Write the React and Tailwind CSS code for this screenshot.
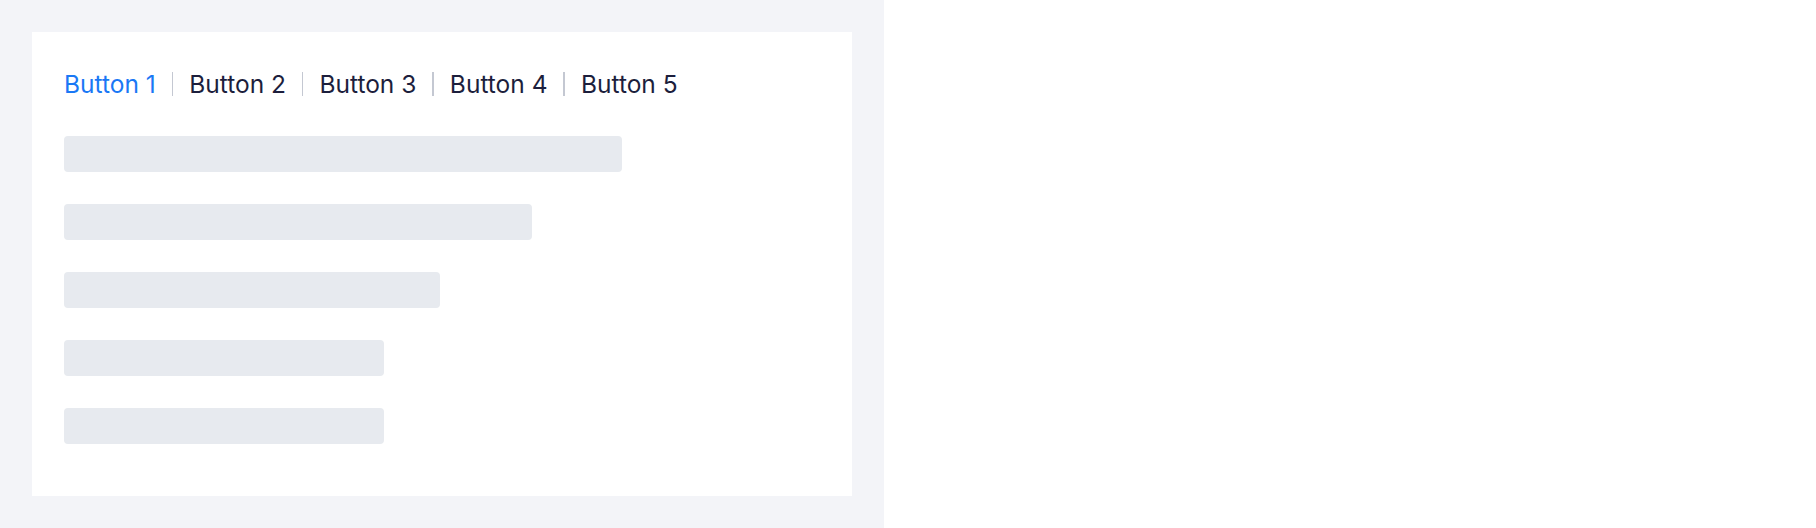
const tabs = ['Button 1', 'Button 2', 'Button 3', 'Button 4', 'Button 5']
const bars = [558, 468, 376, 320, 320]

export default function App() {
  return (
    <div className="flex min-h-[528px] bg-white" style={{ fontFamily: 'Inter, "Noto Sans", sans-serif' }}>
      <div className="w-[884px] h-[528px] bg-[#f3f4f8] p-8">
        <div className="bg-white h-[464px] px-8 pt-8">
          <div className="flex items-center h-10">
            {tabs.map((t, i) => (
              <div key={t} className="flex items-center">
                {i > 0 && <span className="w-[1.5px] h-6 bg-[#c4c8d2] mx-4" />}
                <span className={`text-[24.5px] leading-10 ${i === 0 ? 'text-[#1a78f5]' : 'text-[#1c1e3c]'}`}>{t}</span>
              </div>
            ))}
          </div>

          <div className="mt-8 flex flex-col gap-8">
            {bars.map((w, i) => (
              <div key={i} className="h-9 rounded bg-[#e7eaef]" style={{ width: w }} />
            ))}
          </div>
        </div>
      </div>
    </div>
  )
}
